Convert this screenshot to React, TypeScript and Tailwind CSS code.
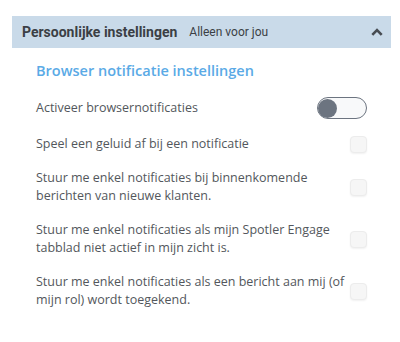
const rows = [
  "Speel een geluid af bij een notificatie",
  "Stuur me enkel notificaties bij binnenkomende berichten van nieuwe klanten.",
  "Stuur me enkel notificaties als mijn Spotler Engage tabblad niet actief in mijn zicht is.",
  "Stuur me enkel notificaties als een bericht aan mij (of mijn rol) wordt toegekend.",
];

export default function App() {
  return (
    <div className="w-[400px] h-[342px] bg-white pt-4 pl-3 pr-[9px]">
      <div className="h-8 bg-[#c9dae9] flex items-center pl-[10px] pr-[8px]">
        <span className="font-['Roboto',sans-serif] font-bold text-[14px] text-[#3b3f45]">
          Persoonlijke instellingen
        </span>
        <span className="ml-3 font-['Roboto',sans-serif] text-[12px] text-[#3b3f45]">
          Alleen voor jou
        </span>
        <svg className="ml-auto" width="12" height="8" viewBox="0 0 12 8" fill="none">
          <polyline points="1.3,6.8 6,2 10.7,6.8" stroke="#474c52" strokeWidth="2.6" />
        </svg>
      </div>

      <div className="pl-6 pr-[24px] font-['Open_Sans',sans-serif]">
        <h2 className="mt-[13px] text-[14.5px] leading-[20px] font-semibold text-[#5aaae6]">
          Browser notificatie instellingen
        </h2>

        <div className="mt-[16px] flex items-center justify-between">
          <span className="text-[12.5px] leading-[18px] text-[#53575c]">Activeer browsernotificaties</span>
          <div className="w-[50px] h-[22px] rounded-full border-[1.5px] border-[#6c7480] bg-[#f8f9fa] flex items-center">
            <div className="w-[19px] h-[19px] rounded-full bg-[#6c7480]" />
          </div>
        </div>

        <div className="mt-[16px] flex flex-col gap-[16px]">
          {rows.map((r) => (
            <div key={r} className="flex items-center justify-between">
              <span className="w-[310px] text-[12.5px] leading-[18px] text-[#53575c]">{r}</span>
              <div className="w-[17px] h-[17px] rounded-[4px] bg-[#f6f6f6] border border-[#ececec] shadow-[0_1px_2px_rgba(0,0,0,0.06)]" />
            </div>
          ))}
        </div>
      </div>
    </div>
  );
}
